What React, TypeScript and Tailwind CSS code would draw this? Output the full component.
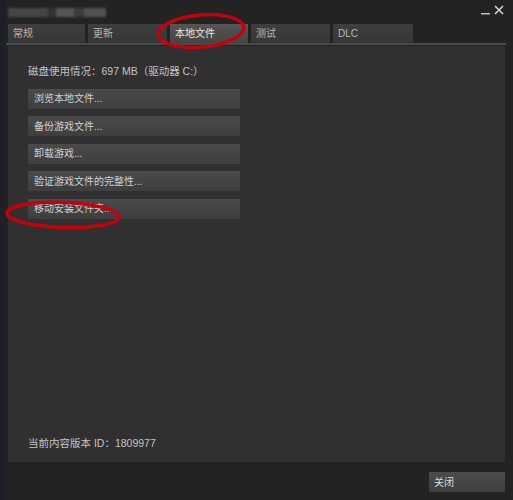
import React from "react";

const font = { fontFamily: '"Liberation Sans", "Noto Sans CJK SC", sans-serif' };

function Tab({ label, active, w }: { label: string; active?: boolean; w: string }) {
  return (
    <div
      className={`${w} h-[19px] flex items-center pl-[5px] text-[10px] ${
        active
          ? "bg-gradient-to-b from-[#555555] to-[#454545] text-[#e6e6e6]"
          : "bg-gradient-to-b from-[#3e3e3e] to-[#363636] text-[#b8b8b8]"
      }`}
    >
      {label}
    </div>
  );
}

function Btn({ label }: { label: string }) {
  return (
    <div className="w-[212px] h-[20px] flex items-center pl-[6px] text-[10px] text-[#d2d2d2] bg-gradient-to-b from-[#4a4a4a] to-[#3e3e3e]">
      {label}
    </div>
  );
}

export default function App() {
  return (
    <div className="relative w-[513px] h-[500px] bg-[#232323] overflow-hidden" style={font}>
      <div className="absolute left-0 top-0 w-[6px] h-[500px] bg-[#1d2024]" />
      {/* title bar */}
      <div className="relative h-[24px] flex items-start">
        <div className="flex mt-[8px] ml-[8px] blur-[0.8px]">
          <div className="w-[40px] h-[9px] bg-[#464646]" />
          <div className="w-[8px] h-[9px] bg-[#333333]" />
          <div className="w-[18px] h-[9px] bg-[#555555]" />
          <div className="w-[10px] h-[9px] bg-[#3c3c3c]" />
          <div className="w-[22px] h-[9px] bg-[#525252]" />
        </div>
        <div className="ml-auto mr-[9px] mt-[5px] flex items-center gap-[4px] text-[#c8c8c8]">
          <svg width="9" height="10" viewBox="0 0 9 10">
            <rect x="0" y="8" width="9" height="1.5" fill="#bdbdbd" />
          </svg>
          <svg width="10" height="10" viewBox="0 0 10 10">
            <path d="M1 1 L9 9 M9 1 L1 9" stroke="#d4d4d4" strokeWidth="1.6" />
          </svg>
        </div>
      </div>
      {/* tabs */}
      <div className="flex gap-[3px] pl-[8px]">
        <Tab label="常规" w="w-[77px]" />
        <Tab label="更新" w="w-[79px]" />
        <Tab label="本地文件" w="w-[78px]" active />
        <Tab label="测试" w="w-[79px]" />
        <Tab label="DLC" w="w-[80px]" />
      </div>
      <div className="h-[2px] w-[506px] bg-[#4a4a4a]" />
      {/* panel */}
      <div className="ml-[8px] mr-[8px] mt-[1px] h-[416px] bg-[#303030] flex flex-col pl-[20px] pt-[20px]">
        <div className="text-[10.5px] text-[#c4c4c4] leading-none">磁盘使用情况：697 MB（驱动器 C:）</div>
        <div className="flex flex-col gap-[7.5px] mt-[12px]">
          <Btn label="浏览本地文件..." />
          <Btn label="备份游戏文件..." />
          <Btn label="卸载游戏..." />
          <Btn label="验证游戏文件的完整性..." />
          <Btn label="移动安装文件夹..." />
        </div>
        <div className="mt-auto mb-[14px] text-[10.5px] text-[#c4c4c4] leading-none">当前内容版本 ID：1809977</div>
      </div>
      {/* footer */}
      <div className="flex justify-end pr-[8px] mt-[10px]">
        <div className="w-[76px] h-[20px] flex items-center pl-[5px] text-[10px] text-[#dcdcdc] bg-gradient-to-b from-[#4c4c4c] to-[#3e3e3e]">
          关闭
        </div>
      </div>
      {/* red annotations */}
      <svg className="absolute left-0 top-0 pointer-events-none" width="513" height="500" viewBox="0 0 513 500">
        <ellipse cx="201" cy="31" rx="43" ry="16" transform="rotate(-5 201 31)" fill="none" stroke="#c8000c" strokeWidth="3.5" />
        <ellipse cx="63" cy="215" rx="56" ry="12.5" transform="rotate(2 63 215)" fill="none" stroke="#c8000c" strokeWidth="3.5" />
      </svg>
    </div>
  );
}
